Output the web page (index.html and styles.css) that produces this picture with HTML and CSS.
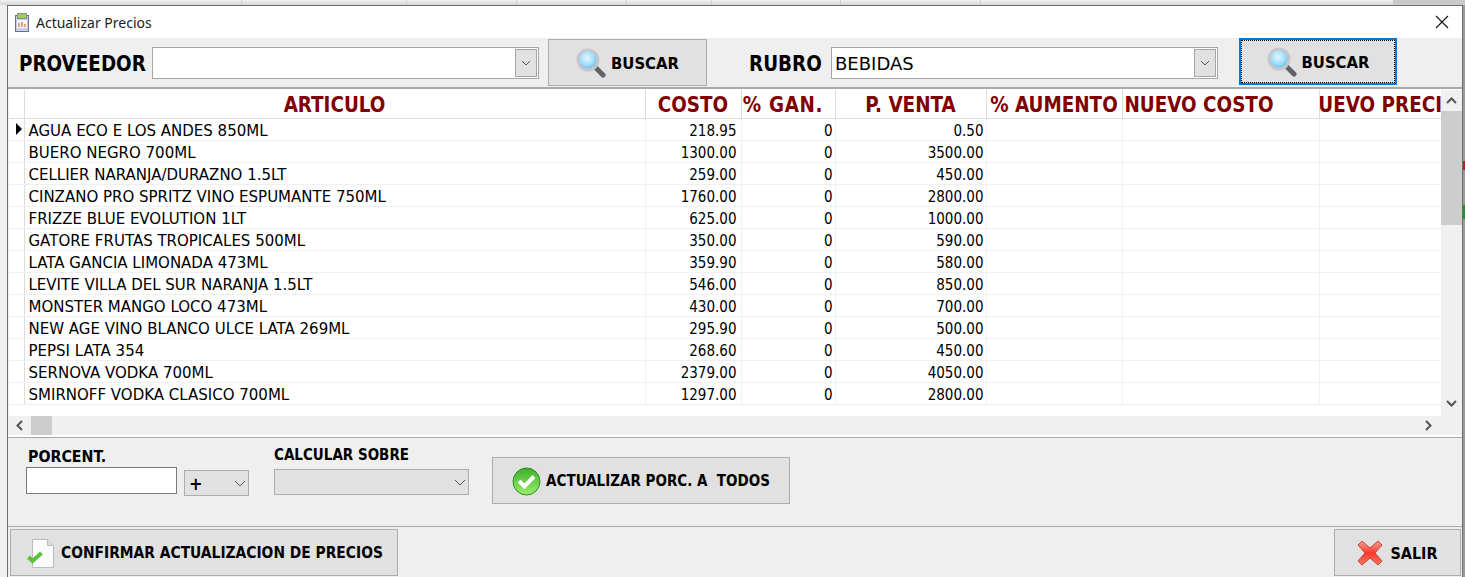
FILE: index.html
```html
<!DOCTYPE html>
<html lang="es">
  <head>
    <meta charset="UTF-8" />
    <title>Actualizar Precios</title>
    <link rel="stylesheet" href="styles.css">
  </head>
  <body>
    <svg class="defs" width="0" height="0">
      <defs>
        <radialGradient id="lente" cx="45%" cy="40%" r="60%">
          <stop offset="0" stop-color="#e4f6ff" />
          <stop offset="0.6" stop-color="#9fdcfb" />
          <stop offset="1" stop-color="#5fb4f2" />
        </radialGradient>
        <linearGradient id="verde" x1="0" y1="0" x2="0" y2="1">
          <stop offset="0" stop-color="#3fae2a" />
          <stop offset="1" stop-color="#9cf06a" />
        </linearGradient>
        <linearGradient id="rojo" x1="0" y1="0" x2="0" y2="1">
          <stop offset="0" stop-color="#f9a090" />
          <stop offset="0.5" stop-color="#ff3a2c" />
          <stop offset="1" stop-color="#f57a68" />
        </linearGradient>
        <symbol id="lupa" viewBox="0 0 30 30">
          <path d="M18 18l9 9" stroke="#5f6266" stroke-width="5" stroke-linecap="round" />
          <circle cx="12" cy="12" r="10" fill="url(#lente)" stroke="#c4c8cc" stroke-width="3" />
        </symbol>
      </defs>
    </svg>

    <div class="ventana">
      <div class="titulo">
        <svg class="titulo_icono" width="16" height="21" viewBox="0 0 16 21">
          <rect x="1.500" y="3.500" width="13" height="16" fill="#c9cdea" stroke="#6a7088" />
          <rect x="3.500" y="1.500" width="9" height="5" fill="#9fd05a" stroke="#8a8f8f" />
          <rect x="3" y="8" width="10" height="8" fill="#f2f3fb" />
          <path d="M5 15v-4M8 15v-5M11 15v-3" stroke="#e58a5a" stroke-width="1.500" />
        </svg>
        <span class="titulo_texto">Actualizar Precios</span>
        <svg class="cerrar" width="14" height="14" viewBox="0 0 14 14">
          <path d="M1 1l12 12M13 1L1 13" stroke="#111" stroke-width="1.100" />
        </svg>
      </div>

      <div class="barra">
        <label class="etiqueta">PROVEEDOR</label>
        <div class="combo combo_prov">
          <span class="combo_texto"></span>
          <span class="combo_flecha"><svg width="10" height="6" viewBox="0 0 10 6"><path d="M1 1l4 4 4-4" fill="none" stroke="#555" /></svg></span>
        </div>
        <button class="boton boton_buscar">
          <svg width="30" height="30"><use href="#lupa" /></svg>
          BUSCAR
        </button>
        <label class="etiqueta etiqueta_rubro">RUBRO</label>
        <div class="combo combo_rubro">
          <span class="combo_texto">BEBIDAS</span>
          <span class="combo_flecha"><svg width="10" height="6" viewBox="0 0 10 6"><path d="M1 1l4 4 4-4" fill="none" stroke="#555" /></svg></span>
        </div>
        <button class="boton boton_buscar boton_foco">
          <svg width="30" height="30"><use href="#lupa" /></svg>
          BUSCAR
        </button>
      </div>

      <div class="grilla">
        <div class="grilla_centro">
          <div class="grilla_datos">
            <table class="tabla">
              <colgroup>
                <col class="c_fila" /><col class="c_art" /><col class="c_costo" /><col class="c_gan" />
                <col class="c_venta" /><col class="c_aum" /><col class="c_nuevo" /><col class="c_precio" />
              </colgroup>
              <thead>
                <tr>
                  <th></th>
                  <th><div>ARTICULO</div></th>
                  <th><div>COSTO</div></th>
                  <th><div class="gan">% GAN.</div></th>
                  <th><div>P. VENTA</div></th>
                  <th><div>% AUMENTO</div></th>
                  <th><div class="izq">NUEVO COSTO</div></th>
                  <th><div>NUEVO PRECIO</div></th>
                </tr>
              </thead>
              <tbody>
                <tr><td class="fila"><span class="puntero"></span></td><td>AGUA ECO E LOS ANDES 850ML</td><td class="num costo">218.95</td><td class="num">0</td><td class="num">0.50</td><td></td><td></td><td></td></tr>
                <tr><td class="fila"></td><td>BUERO NEGRO 700ML</td><td class="num costo">1300.00</td><td class="num">0</td><td class="num">3500.00</td><td></td><td></td><td></td></tr>
                <tr><td class="fila"></td><td>CELLIER NARANJA/DURAZNO 1.5LT</td><td class="num costo">259.00</td><td class="num">0</td><td class="num">450.00</td><td></td><td></td><td></td></tr>
                <tr><td class="fila"></td><td>CINZANO PRO SPRITZ VINO ESPUMANTE 750ML</td><td class="num costo">1760.00</td><td class="num">0</td><td class="num">2800.00</td><td></td><td></td><td></td></tr>
                <tr><td class="fila"></td><td>FRIZZE BLUE EVOLUTION 1LT</td><td class="num costo">625.00</td><td class="num">0</td><td class="num">1000.00</td><td></td><td></td><td></td></tr>
                <tr><td class="fila"></td><td>GATORE FRUTAS TROPICALES 500ML</td><td class="num costo">350.00</td><td class="num">0</td><td class="num">590.00</td><td></td><td></td><td></td></tr>
                <tr><td class="fila"></td><td>LATA GANCIA LIMONADA 473ML</td><td class="num costo">359.90</td><td class="num">0</td><td class="num">580.00</td><td></td><td></td><td></td></tr>
                <tr><td class="fila"></td><td>LEVITE VILLA DEL SUR NARANJA 1.5LT</td><td class="num costo">546.00</td><td class="num">0</td><td class="num">850.00</td><td></td><td></td><td></td></tr>
                <tr><td class="fila"></td><td>MONSTER MANGO LOCO 473ML</td><td class="num costo">430.00</td><td class="num">0</td><td class="num">700.00</td><td></td><td></td><td></td></tr>
                <tr><td class="fila"></td><td>NEW AGE VINO BLANCO ULCE LATA 269ML</td><td class="num costo">295.90</td><td class="num">0</td><td class="num">500.00</td><td></td><td></td><td></td></tr>
                <tr><td class="fila"></td><td>PEPSI LATA 354</td><td class="num costo">268.60</td><td class="num">0</td><td class="num">450.00</td><td></td><td></td><td></td></tr>
                <tr><td class="fila"></td><td>SERNOVA VODKA 700ML</td><td class="num costo">2379.00</td><td class="num">0</td><td class="num">4050.00</td><td></td><td></td><td></td></tr>
                <tr><td class="fila"></td><td>SMIRNOFF VODKA CLASICO 700ML</td><td class="num costo">1297.00</td><td class="num">0</td><td class="num">2800.00</td><td></td><td></td><td></td></tr>
              </tbody>
            </table>
          </div>
          <div class="scroll_v">
            <svg class="flecha" width="11" height="7" viewBox="0 0 11 7"><path d="M1 6l4.500-4.500L10 6" fill="none" stroke="#555" stroke-width="2" /></svg>
            <div class="scroll_v_pista"><div class="scroll_v_barra"></div></div>
            <svg class="flecha" width="11" height="7" viewBox="0 0 11 7"><path d="M1 1l4.500 4.500L10 1" fill="none" stroke="#555" stroke-width="2" /></svg>
          </div>
        </div>
        <div class="scroll_h">
          <svg class="flecha" width="7" height="11" viewBox="0 0 7 11"><path d="M6 1L1.500 5.500 6 10" fill="none" stroke="#555" stroke-width="2" /></svg>
          <div class="scroll_h_pista"><div class="scroll_h_barra"></div></div>
          <svg class="flecha" width="7" height="11" viewBox="0 0 7 11"><path d="M1 1l4.500 4.500L1 10" fill="none" stroke="#555" stroke-width="2" /></svg>
        </div>
      </div>

      <div class="panel">
        <div class="campo campo_porc">
          <label class="etiqueta_chica">PORCENT.</label>
          <div class="campo_fila">
            <input class="entrada" type="text" />
            <div class="combo_gris combo_signo">
              <span>+</span>
              <svg width="12" height="7" viewBox="0 0 12 7"><path d="M1 1l5 5 5-5" fill="none" stroke="#555" /></svg>
            </div>
          </div>
        </div>
        <div class="campo campo_calc">
          <label class="etiqueta_chica">CALCULAR SOBRE</label>
          <div class="combo_gris combo_calc">
            <span></span>
            <svg width="12" height="7" viewBox="0 0 12 7"><path d="M1 1l5 5 5-5" fill="none" stroke="#555" /></svg>
          </div>
        </div>
        <button class="boton boton_todos">
          <svg width="29" height="29" viewBox="0 0 29 29">
            <circle cx="14.500" cy="14.500" r="13.500" fill="url(#verde)" stroke="#2a8f2a" />
            <path d="M7 14l5.500 5.500L22 9.500" fill="none" stroke="#fff" stroke-width="4" />
          </svg>
          ACTUALIZAR PORC. A&nbsp; TODOS
        </button>
      </div>

      <div class="pie">
        <button class="boton boton_confirmar">
          <svg width="27" height="29" viewBox="0 0 27 29">
            <path d="M5.500 .5h15l6 6v22h-21z" fill="#fbfbfb" stroke="#bcbcbc" />
            <path d="M20.500 .5v6h6" fill="#dcdcdc" stroke="#bcbcbc" />
            <path d="M1.500 18l4 4 9-8" fill="none" stroke="#5cc23a" stroke-width="4" />
          </svg>
          CONFIRMAR ACTUALIZACION DE PRECIOS
        </button>
        <button class="boton boton_salir">
          <svg width="26" height="26" viewBox="0 0 26 26">
            <path d="M5 1l8 7 8-7 4 4-7 8 7 8-4 4-8-7-8 7-4-4 7-8-7-8z" fill="url(#rojo)" stroke="#c9433a" />
          </svg>
          SALIR
        </button>
      </div>
    </div>
  </body>
</html>
```

FILE: styles.css
```css
* {
  box-sizing: border-box;
}
html,
body {
  height: 100%;
}
body {
  margin: 0;
  padding: 5px 2px 0 7px;
  background-color: #f0f0f0;
  /* lo que asoma de la ventana de atras */
  background-image:
    linear-gradient(#c9c9c9, #c9c9c9),
    linear-gradient(#d0d0d0, #d0d0d0), linear-gradient(#d0d0d0, #d0d0d0),
    linear-gradient(#d0d0d0, #d0d0d0), linear-gradient(#d0d0d0, #d0d0d0),
    linear-gradient(#d0d0d0, #d0d0d0), linear-gradient(#d0d0d0, #d0d0d0),
    linear-gradient(#d0d0d0, #d0d0d0),
    linear-gradient(#b5202a, #b5202a), linear-gradient(#2c8a3a, #2c8a3a),
    linear-gradient(#9a9a9a, #9a9a9a),
    linear-gradient(#f2f2f2, #d6d6d6);
  background-size:
    72px 5px,
    1px 5px, 1px 5px, 1px 5px, 1px 5px, 1px 5px, 1px 5px, 1px 5px,
    2px 9px, 2px 14px,
    2px 577px,
    100% 5px;
  background-position:
    1393px 0,
    241px 0, 406px 0, 516px 0, 626px 0, 711px 0, 840px 0, 980px 0,
    1463px 161px, 1463px 205px,
    1463px 0,
    0 0;
  background-repeat: no-repeat;
  font-family: "DejaVu Sans Condensed", "DejaVu Sans", sans-serif;
  overflow: hidden;
  color: #000;
}
.defs {
  position: absolute;
}
.ventana {
  height: 572px;
  border: 1px solid #6f6f6f;
  border-width: 1px 1px 0 1px;
  background-color: #efefef;
  display: flex;
  flex-direction: column;
}

/* titulo */
.titulo {
  height: 32px;
  flex: none;
  background-color: #fff;
  display: flex;
  align-items: center;
  padding: 0 13px 0 6px;
}
.titulo_icono {
  margin-right: 6px;
}
.titulo_texto {
  font-family: "Noto Sans", sans-serif;
  font-size: 14px;
  color: #222;
}
.cerrar {
  margin-left: auto;
}

/* barra de busqueda */
.barra {
  height: 51px;
  flex: none;
  display: flex;
  align-items: flex-start;
  padding-left: 11px;
  border-bottom: 2px solid #a8a8a8;
}
.etiqueta {
  font-size: 20.400px;
  font-weight: bold;
  line-height: 24px;
  margin-top: 14px;
  width: 133px;
}
.etiqueta_rubro {
  margin-left: 42px;
  width: 82px;
}
.combo {
  height: 32px;
  margin-top: 9px;
  width: 387px;
  background-color: #fff;
  border: 1px solid #a6a6a6;
  display: flex;
  align-items: center;
  justify-content: space-between;
  padding-right: 1px;
}
.combo_texto {
  font-family: "DejaVu Sans", sans-serif;
  font-size: 18px;
  padding-left: 3px;
}
.combo_flecha {
  width: 22px;
  height: 28px;
  background-color: #e1e1e1;
  border: 1px solid #a6a6a6;
  display: flex;
  align-items: center;
  justify-content: center;
}
.boton {
  font-family: inherit;
  font-weight: bold;
  font-size: 15px;
  color: #000;
  background-color: #e1e1e1;
  border: 1px solid #adadad;
  display: flex;
  align-items: center;
  justify-content: center;
  padding: 0;
}
.boton_buscar {
  width: 159px;
  height: 47px;
  margin: 1px 0 0 9px;
  padding-top: 1px;
  gap: 5px;
  font-size: 16.500px;
}
.boton_foco {
  width: 158px;
  margin: 0 0 0 21px;
  border: 2px solid #0078d7;
  outline: 1px dotted #000;
  outline-offset: -3px;
}

/* grilla */
.grilla {
  height: 347px;
  flex: none;
  margin: 0 0 0 1px;
  background-color: #fff;
  display: flex;
  flex-direction: column;
}
.grilla_centro {
  flex: 1;
  display: flex;
  min-height: 0;
}
.grilla_datos {
  width: 1432px;
  overflow: hidden;
}
.tabla {
  table-layout: fixed;
  border-collapse: collapse;
  width: 1432px;
  font-size: 15px;
  margin-top: 1px;
}
.c_fila { width: 15px; }
.c_art { width: 621px; }
.c_costo { width: 96px; }
.c_gan { width: 94px; }
.c_venta { width: 151px; }
.c_aum { width: 136px; }
.c_nuevo { width: 197px; }
.c_precio { width: 122px; }
.tabla th {
  height: 28px;
  padding: 2px 0 0;
  font-size: 20.400px;
  font-weight: bold;
  color: #800000;
  border-right: 1px solid #dcdcdc;
  border-bottom: 1px solid #dcdcdc;
}
.tabla th:last-child {
  border-right: none;
}
.tabla th div {
  display: flex;
  justify-content: center;
  white-space: nowrap;
  overflow: hidden;
}
.tabla th .izq {
  justify-content: flex-start;
  padding-left: 2px;
}
.tabla th .gan {
  letter-spacing: 0.7px;
  padding-right: 10px;
}
.tabla td {
  height: 22px;
  padding: 4px 3px 0 4px;
  font-family: "DejaVu Sans", sans-serif;
  line-height: 17px;
  white-space: nowrap;
  overflow: hidden;
  border-right: 1px solid #f0f0f0;
  border-bottom: 1px solid #f0f0f0;
}
.tabla td:last-child {
  border-right: none;
}
.tabla .num {
  font-family: "DejaVu Sans Condensed", sans-serif;
  padding-right: 2px;
  text-align: right;
}
.tabla .costo {
  padding-right: 4px;
}
.tabla .fila {
  border-right-color: #dcdcdc;
  padding: 0;
}
.puntero {
  display: block;
  width: 0;
  height: 0;
  margin-left: 7px;
  border-left: 6px solid #000;
  border-top: 6px solid transparent;
  border-bottom: 6px solid transparent;
}

/* scrolls */
.flecha {
  flex: none;
}
.scroll_v {
  flex: 1;
  background-color: #f0f0f0;
  display: flex;
  flex-direction: column;
  align-items: center;
  padding: 7px 0 9px;
  margin-top: 1px;
}
.scroll_v_pista {
  flex: 1;
  width: 100%;
  margin: 7px 0;
}
.scroll_v_barra {
  height: 114px;
  background-color: #cdcdcd;
}
.scroll_h {
  height: 20px;
  flex: none;
  background-color: #f0f0f0;
  border-bottom: 1px solid #fff;
  display: flex;
  align-items: center;
  padding: 0 30px 0 7px;
}
.scroll_h_pista {
  flex: 1;
  height: 19px;
  margin-left: 8px;
}
.scroll_h_barra {
  width: 21px;
  height: 19px;
  background-color: #cdcdcd;
}

/* porcentajes */
.panel {
  height: 91px;
  flex: none;
  border-top: 1px solid #fff;
  border-bottom: 1px solid #a8a8a8;
  display: flex;
  align-items: flex-start;
  padding-left: 18px;
  box-shadow: inset 0 1px 0 #a8a8a8;
}
.campo_porc {
  margin-top: 11px;
}
.etiqueta_chica {
  display: block;
  font-size: 15px;
  font-weight: bold;
  line-height: 18px;
}
.campo_porc .etiqueta_chica {
  font-size: 15.800px;
  padding-left: 2px;
}
.campo_fila {
  display: flex;
  align-items: flex-start;
  margin-top: 1px;
}
.entrada {
  width: 151px;
  height: 27px;
  border: 1px solid #7a7a7a;
  background-color: #fff;
  padding: 0;
}
.combo_gris {
  height: 26px;
  background-color: #e1e1e1;
  border: 1px solid #adadad;
  display: flex;
  align-items: center;
  justify-content: space-between;
  padding: 0 2px 0 4px;
  font-size: 18px;
  font-weight: bold;
}
.combo_signo {
  width: 65px;
  margin: 3px 0 0 7px;
}
.campo_calc {
  margin: 9px 0 0 25px;
}
.combo_calc {
  width: 195px;
  margin-top: 5px;
}
.boton_todos {
  width: 298px;
  height: 47px;
  margin: 20px 0 0 23px;
  padding-top: 1px;
  gap: 5px;
}

/* pie */
.pie {
  flex: 1;
  display: flex;
  justify-content: space-between;
  align-items: flex-start;
  padding: 2px 1px 0 2px;
}
.boton_confirmar {
  width: 388px;
  height: 47px;
  gap: 7px;
  justify-content: flex-start;
  padding: 1px 0 0 16px;
  font-size: 15.400px;
}
.boton_salir {
  width: 127px;
  height: 47px;
  padding-top: 1px;
  gap: 7px;
  font-size: 16px;
}
```
